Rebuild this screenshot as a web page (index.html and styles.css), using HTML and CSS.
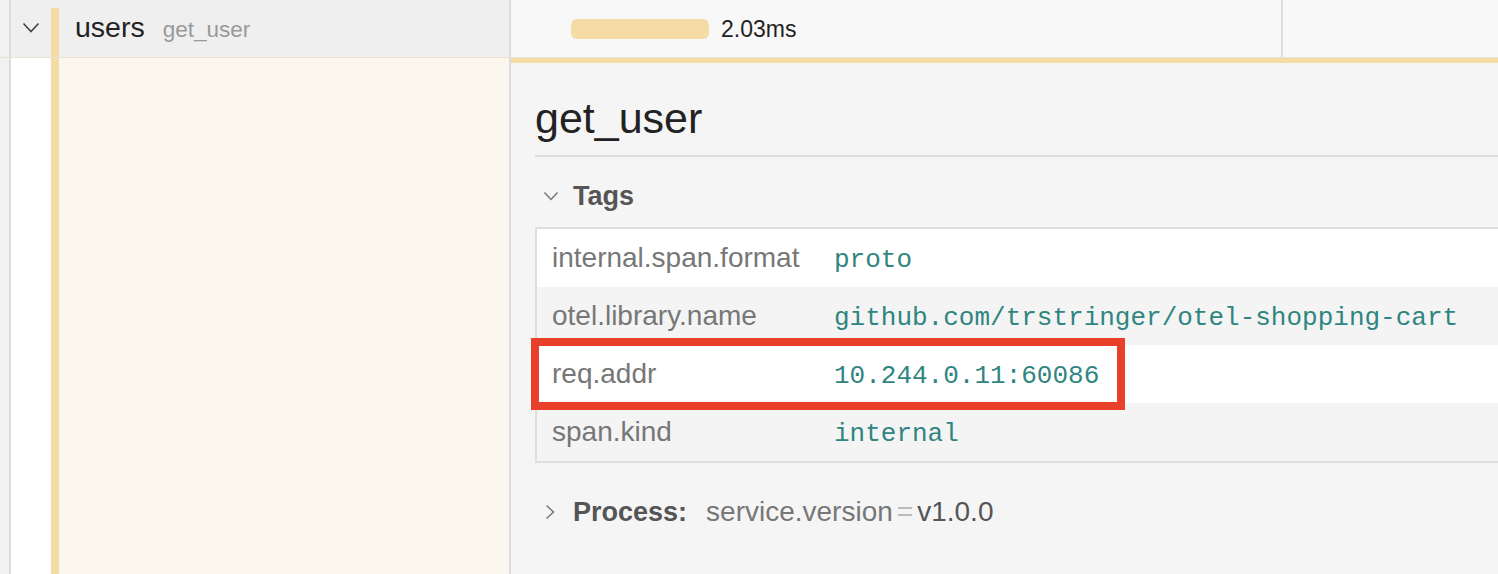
FILE: index.html
```html
<!DOCTYPE html>
<html lang="en">
<head>
    <meta charset="UTF-8">
    <title>Trace detail - get_user</title>
    <link rel="stylesheet" href="styles.css">
</head>
<body>
    <div class="span-row">
        <div class="name-col head">
            <div class="indent"></div>
            <div class="toggle">
                <svg width="18" height="12" viewBox="0 0 18 12"><path d="M1.5 1.5 L9 9.5 L16.5 1.5" fill="none" stroke="#444" stroke-width="1.6"/></svg>
            </div>
            <div class="color-bar"></div>
            <div class="label">
                <span class="service">users</span>
                <span class="operation">get_user</span>
            </div>
        </div>
        <div class="timeline-col">
            <div class="duration-bar"></div>
            <span class="duration">2.03ms</span>
            <div class="tick"></div>
        </div>
    </div>

    <div class="detail-row">
        <div class="name-col body">
            <div class="indent"></div>
            <div class="toggle"></div>
            <div class="color-bar full"></div>
            <div class="fill"></div>
        </div>
        <div class="detail-col">
            <h2 class="detail-title">get_user</h2>

            <div class="section-header">
                <svg width="16" height="11" viewBox="0 0 16 11"><path d="M1.5 1.5 L8 8.5 L14.5 1.5" fill="none" stroke="#777" stroke-width="1.5"/></svg>
                <strong>Tags</strong>
            </div>

            <div class="tags">
                <div class="tag-row">
                    <div class="tag-key">internal.span.format</div>
                    <div class="tag-value">proto</div>
                </div>
                <div class="tag-row">
                    <div class="tag-key">otel.library.name</div>
                    <div class="tag-value">github.com/trstringer/otel-shopping-cart</div>
                </div>
                <div class="tag-row">
                    <div class="tag-key">req.addr</div>
                    <div class="tag-value">10.244.0.11:60086</div>
                </div>
                <div class="tag-row">
                    <div class="tag-key">span.kind</div>
                    <div class="tag-value">internal</div>
                </div>
                <div class="highlight"></div>
            </div>

            <div class="section-header process">
                <svg width="11" height="16" viewBox="0 0 11 16"><path d="M1.5 1.5 L8.5 8 L1.5 14.5" fill="none" stroke="#777" stroke-width="1.5"/></svg>
                <strong>Process:</strong>
                <span class="kv">
                    <span class="kv-key">service.version</span><span class="kv-eq">=</span><span class="kv-val">v1.0.0</span>
                </span>
            </div>
        </div>
    </div>
</body>
</html>
```

FILE: styles.css
```css
body {
    font-family: 'Liberation Sans', Arial, sans-serif;
    margin: 0;
    padding: 0;
    width: 1498px;
    height: 574px;
    overflow: hidden;
    background: #f5f5f5;
    color: #222;
}

.span-row {
    display: flex;
    height: 57px;
    border-bottom: 1px solid #e8e3d6;
}

.detail-row {
    display: flex;
    height: 516px;
}

.name-col {
    width: 509px;
    flex-shrink: 0;
    display: flex;
    border-right: 2px solid #dcdcdc;
}

.name-col.head {
    background: #efefef;
}

.name-col .indent {
    width: 9px;
    border-right: 2px solid #dcdcdc;
    background: #f1f1f1;
}

.name-col .toggle {
    width: 40px;
    display: flex;
    align-items: center;
    justify-content: center;
    padding-bottom: 2px;
    box-sizing: border-box;
}

.name-col.body .toggle {
    background: #fff;
}

.color-bar {
    width: 8px;
    margin-top: 8px;
    background: #f5dca5;
}

.color-bar.full {
    margin-top: 0;
}

.label {
    display: flex;
    align-items: center;
    gap: 18px;
    padding-left: 16px;
    padding-bottom: 2px;
}

.service {
    font-size: 28.5px;
    color: #222;
}

.operation {
    font-size: 22.5px;
    color: #999;
    padding-top: 4px;
}

.fill {
    flex: 1;
    background: #fbf7ee;
}

.timeline-col {
    flex: 1;
    position: relative;
    display: flex;
    align-items: center;
    padding-left: 60px;
    background: #f8f8f8;
}

.duration-bar {
    width: 138px;
    height: 20px;
    border-radius: 6px;
    background: #f5dca5;
}

.duration {
    font-size: 23px;
    margin-left: 12px;
    padding-top: 2px;
}

.tick {
    position: absolute;
    left: 770px;
    top: 0;
    bottom: 0;
    width: 2px;
    background: #dedede;
}

.detail-col {
    flex: 1;
    border-top: 5px solid #f5dca5;
    padding-left: 24px;
    background: #f5f5f5;
    overflow: hidden;
}

.detail-title {
    margin: 0;
    padding: 30px 0 12px;
    font-size: 43px;
    font-weight: normal;
    line-height: 50px;
    color: #222;
    border-bottom: 2px solid #dedede;
}

.section-header {
    display: flex;
    align-items: center;
    height: 36px;
    margin-top: 21px;
    padding-left: 8px;
    gap: 14px;
    font-size: 27px;
    color: #555;
}

.section-header strong {
    font-weight: bold;
}

.tags {
    position: relative;
    margin-top: 13px;
    width: 1000px;
    border: 2px solid #dedede;
}

.tag-row {
    display: flex;
    align-items: center;
    height: 58px;
    background: #fff;
}

.tag-row:nth-child(even) {
    background: #f4f4f4;
}

.tag-key {
    width: 282px;
    padding-left: 15px;
    font-size: 28px;
    color: #777;
}

.tag-value {
    font-family: 'Liberation Mono', 'Courier New', monospace;
    font-size: 26px;
    color: #2f8580;
    padding-top: 4px;
}

.highlight {
    position: absolute;
    left: -6px;
    top: 109px;
    width: 578px;
    height: 56px;
    border: 8px solid #e8402a;
}

.process {
    margin-top: 31px;
    padding-left: 10px;
    gap: 17px;
}

.kv {
    margin-left: 2px;
    font-size: 28px;
}

.kv-key {
    color: #777;
}

.kv-eq {
    color: #bbb;
    margin: 0 4px;
}

.kv-val {
    color: #555;
}
```
